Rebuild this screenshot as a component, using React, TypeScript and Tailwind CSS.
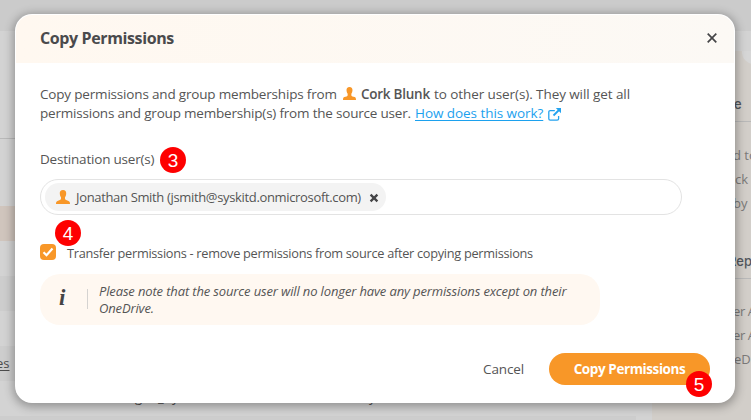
import React from "react";

function Person({ className = "" }: { className?: string }) {
  return (
    <svg className={className} viewBox="0 0 14 14" fill="#f89728">
      <path d="M7 0C4.7 0 3.7 1.5 3.8 3.5C3.9 5.3 4.3 6.3 5 7.2V8.8C5 9.4 4.6 9.8 3.8 10.1L1.5 10.9C.4 11.3 0 12.1 0 14H14C14 12.1 13.6 11.3 12.5 10.9L10.2 10.1C9.4 9.8 9 9.4 9 8.8V7.2C9.7 6.3 10.1 5.3 10.2 3.5C10.3 1.5 9.3 0 7 0Z" />
    </svg>
  );
}

function Badge({ n, className }: { n: number; className: string }) {
  return (
    <span
      className={`absolute flex size-[26px] items-center justify-center rounded-full bg-[#fe0000] font-['Liberation_Sans',sans-serif] text-[19px] leading-none text-white ${className}`}
    >
      {n}
    </span>
  );
}

function Backdrop() {
  return (
    <div className="flex h-full flex-col bg-[#d3d3d3]">
      <div className="h-[31px] shrink-0 bg-[#cbcbcb]" />
      <div className="flex min-h-0 flex-1">
        <div className="w-[652px] shrink-0 text-[13px] text-[#4c4c4c]">
          <div className="h-[107px]" />
          <div className="h-[68px] border-t border-[#b9b9b9]" />
          <div className="h-[35px] bg-[#d0c5bd]" />
          <div className="h-[35px]" />
          <div className="h-[35px] bg-[#cdcdcd]" />
          <div className="h-[35px]" />
          <div className="h-[35px] bg-[#cdcdcd] pt-[8px]">
            <span className="-ml-[4px] block leading-[18px] underline underline-offset-2">es</span>
          </div>
          <div className="flex h-[35px] pt-[7px] leading-[18px]">
            <span className="ml-[135px] w-[23px]">g</span>
            <span className="w-[14px]">_</span>
            <span className="w-[197px]">y</span>
            <span>y</span>
          </div>
          <div className="h-[4px] w-[636px] bg-[#cdcdcd]" />
        </div>
        <div className="mt-[20px] flex-1 bg-[#d2cec9]" />
      </div>
    </div>
  );
}

function SidePanel() {
  return (
    <div className="absolute left-[735px] top-[51px] h-[369px] w-[16px] overflow-hidden whitespace-nowrap bg-[#d2cec9] text-[13px] leading-[24px] text-[#7b7a79]">
      <div className="absolute -top-[11px] left-[7px] size-[24px] rounded-full bg-[#d6d6d6]" />
      <div className="h-[71px] border-b border-[#b9b9b9] pt-[41px]">
        <div className="-ml-[1px] font-['Inter',sans-serif] text-[13px] font-medium text-[#53575d]">e</div>
      </div>
      <div className="h-[118px] pt-[21px]">
        <div className="-ml-[2px]">d to</div>
        <div>ck</div>
        <div className="-ml-[2px]">by</div>
      </div>
      <div className="h-[39px] border-b border-[#b9b9b9] pt-[9px]">
        <div className="-ml-[7px] font-['Inter',sans-serif] font-medium text-[#53575d]">Rep</div>
      </div>
      <div className="pt-[20px]">
        <div className="-ml-[2px] tracking-[-0.4px]">er A</div>
        <div className="-ml-[2px] tracking-[-0.4px]">er A</div>
        <div className="-ml-[1px]">eD</div>
      </div>
    </div>
  );
}

export default function App() {
  return (
    <div className="relative h-[420px] w-[751px] overflow-hidden font-['Open_Sans','Noto_Sans',sans-serif] text-[#555555]">
      <Backdrop />
      <SidePanel />
      <div className="absolute left-[15px] top-[14px] flex h-[389px] w-[720px] flex-col rounded-[17px] bg-white p-px shadow-[0_2px_10px_2px_rgba(0,0,0,0.3)]">
        <header className="flex h-[48px] shrink-0 items-center justify-between rounded-t-[16px] bg-linear-to-r from-[#fff8f0] to-[#fcf9f5] pb-[2px] pl-[24px] pr-[17px]">
          <h1 className="text-[16px] font-bold tracking-[-0.38px] text-[#4a4a4c]">Copy Permissions</h1>
          <svg className="size-[10px]" viewBox="0 0 10 10" stroke="#454547" strokeWidth="1.7">
            <path d="M.7.7 9.3 9.3M9.3.7.7 9.3" />
          </svg>
        </header>
        <div className="flex flex-col px-[24px] pt-[22px] text-[13.5px] leading-[19px] whitespace-nowrap">
          <div className="flex h-[19px] items-center">
            <span className="w-[303px] tracking-[-0.18px]">Copy permissions and group memberships from</span>
            <Person className="mb-[3px] size-[13px]" />
            <b className="ml-[5px] w-[73px] font-semibold tracking-[-0.25px]">Cork Blunk</b>
            <span className="tracking-[-0.08px]">to other user(s). They will get all</span>
          </div>
          <div className="flex h-[19px] items-center">
            <span className="w-[375px] tracking-[-0.2px]">permissions and group membership(s) from the source user.</span>
            <a className="w-[128px] tracking-[-0.06px] text-[#1ca1ee] underline underline-offset-2">How does this work?</a>
            <svg className="ml-[5px] mt-[2px] size-[13px]" viewBox="0 0 13 13" fill="none" stroke="#24a3ef" strokeWidth="1.3">
              <path d="M6.8 2.7H2.2Q.8 2.7.8 4.1V10.7Q.8 12.1 2.2 12.1H9.2Q10.6 12.1 10.6 10.7V8" />
              <path d="M5.5 7.5 11 2" strokeWidth="1.8" />
              <path d="M7.8 0H13V5.2Z" fill="#24a3ef" stroke="none" />
            </svg>
          </div>
          <div className="mt-[27px] h-[20px] tracking-[-0.2px]">Destination user(s)</div>
          <div className="mt-[9px] flex h-[36px] w-[642px] items-center rounded-[18px] border border-[#e3e3e3] px-[4px]">
            <div className="flex h-[28px] w-[341px] items-center rounded-full bg-[#f3f3f3] pl-[11px]">
              <Person className="size-[14px]" />
              <span className="ml-[6px] w-[294px] text-[13px] tracking-[-0.34px]">Jonathan Smith (jsmith@syskitd.onmicrosoft.com)</span>
              <svg className="mt-[1px] size-[8px] overflow-visible" viewBox="0 0 8 8" stroke="#454547" strokeWidth="2.3">
                <path d="M.6.6 7.4 7.4M7.4.6.6 7.4" />
              </svg>
            </div>
          </div>
          <div className="mt-[29px] flex h-[16px] items-center">
            <span className="flex size-[16px] items-center justify-center rounded-[4px] bg-[#f89728]">
              <svg className="size-[12px]" viewBox="0 0 12 12" fill="none" stroke="white" strokeWidth="2.2">
                <path d="M1.5 6.2 4.5 9.2 10.5 2.5" />
              </svg>
            </span>
            <span className="ml-[11px] mt-[3px] text-[12.75px] tracking-[-0.29px]">Transfer permissions - remove permissions from source after copying permissions</span>
          </div>
          <div className="mt-[14px] flex h-[51px] w-[560px] rounded-[20px] bg-[#fff8f1] italic">
            <span className="w-[47px] pl-[19px] pt-[13px] font-['Liberation_Serif',serif] text-[23px] font-bold leading-[22px] text-[#444]">i</span>
            <span className="mt-[15px] h-[20px] w-px bg-[#d5d3d1]" />
            <p className="ml-[11px] pt-[9px] text-[13px] leading-[17px] tracking-[-0.14px]">
              Please note that the source user will no longer have any permissions except on their
              <br />
              OneDrive.
            </p>
          </div>
        </div>
        <footer className="mt-[28px] flex h-[32px] items-center pl-[467px] text-[13.5px]">
          <span className="w-[66px] tracking-[-0.1px]">Cancel</span>
          <button className="h-[32px] w-[161px] rounded-full bg-[#f89728] text-[13.5px] font-bold tracking-[-0.4px] text-white">Copy Permissions</button>
        </footer>
      </div>
      <Badge n={3} className="left-[160px] top-[147px]" />
      <Badge n={4} className="left-[55px] top-[220px]" />
      <Badge n={5} className="left-[686px] top-[371px]" />
    </div>
  );
}
